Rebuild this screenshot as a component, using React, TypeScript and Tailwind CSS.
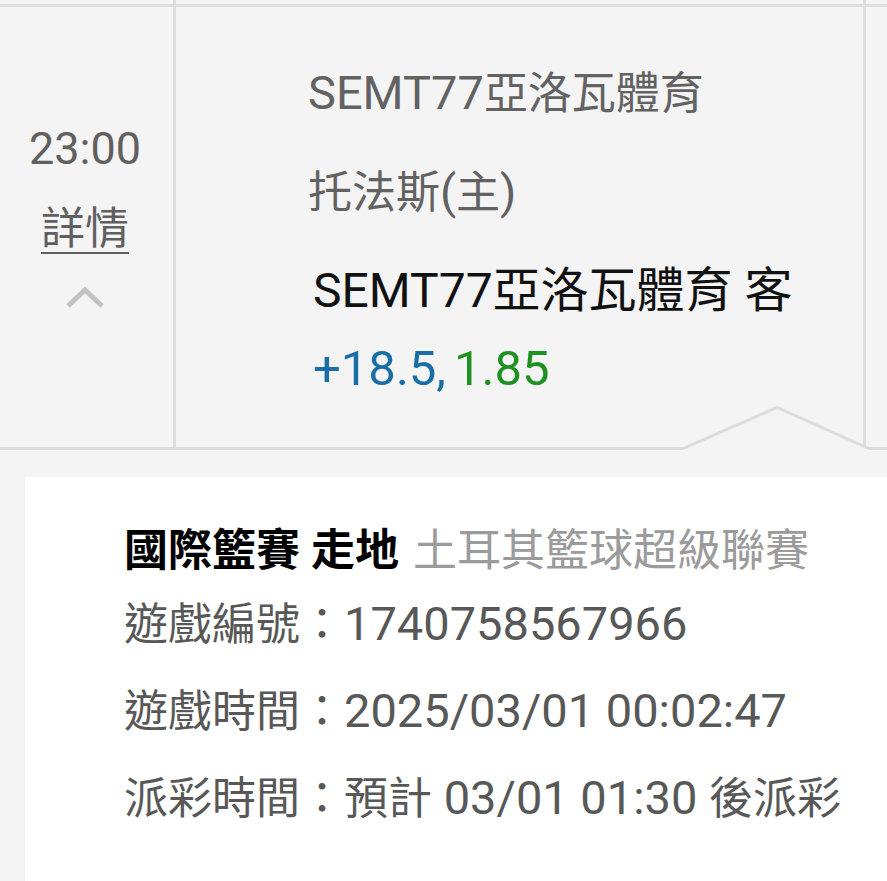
import React from "react";

function L({ children }: { children: React.ReactNode }) {
  return <span className="text-[47px]">{children}</span>;
}

export default function App() {
  const font = "font-['Roboto','Noto_Sans_CJK_TC',sans-serif]";
  return (
    <div className={`w-[887px] h-[881px] overflow-hidden bg-[#f4f4f4] ${font}`}>
      {/* stub of previous row */}
      <div className="flex h-[4px]">
        <div className="w-[176px] border-r-[3px] border-[#dedede]" />
        <div className="w-[690px] border-r-[3px] border-[#dedede]" />
        <div className="flex-1" />
      </div>
      {/* current row */}
      <div className="relative flex h-[443px] border-t-[3px] border-[#dedede]">
        <div className="w-[176px] border-r-[3px] border-[#dedede] flex flex-col items-center pt-[102px] pr-[3px]">
          <div className="text-[45px] leading-[80px] text-[#606060]">23:00</div>
          <div className="text-[44px] leading-[80px] text-[#606060] underline decoration-2 underline-offset-[8px]">詳情</div>
          <svg width="40" height="24" viewBox="0 0 40 24" className="mt-[16px]">
            <polyline points="3,21 20,5 37,21" fill="none" stroke="#c2c2c2" strokeWidth="5" />
          </svg>
        </div>
        <div className="w-[690px] border-r-[3px] border-[#dedede] pt-[37px]">
          <div className="pl-[132px] text-[44px] leading-[98px] text-[#626262] whitespace-nowrap">
            <L>SEMT77</L>亞洛瓦體育
          </div>
          <div className="pl-[132px] text-[44px] leading-[98px] text-[#626262] whitespace-nowrap">
            托法斯<L>(</L>主<L>)</L>
          </div>
          <div className="pl-[137px] text-[48px] leading-[98px] text-[#111111] whitespace-nowrap">SEMT77亞洛瓦體育 客</div>
          <div className="pl-[137px] text-[49px] leading-[58px] whitespace-nowrap">
            <span className="text-[#1a6ea6]">+18.5,</span>
            <span className="text-[#1e9121] ml-[8px]">1.85</span>
          </div>
        </div>
        <div className="flex-1" />
        <svg
          className="absolute left-0 top-[393px]"
          width="887"
          height="60"
          viewBox="0 0 887 60"
        >
          <polyline
            points="0,48.5 683,48.5 777,7.5 869,48.5 887,48.5"
            fill="none"
            stroke="#dcdcdc"
            strokeWidth="3"
          />
        </svg>
      </div>
      <div className="h-[30px]" />
      {/* detail card */}
      <div className="ml-[25px] h-[500px] bg-white pt-[44px] pl-[99px]">
        <div className="text-[44px] leading-[60px] whitespace-nowrap">
          <span className="font-bold text-black">國際籃賽 走地</span>
          <span className="text-[#9b9b9b] ml-[14px]">土耳其籃球超級聯賽</span>
        </div>
        <div className="text-[44px] leading-[86px] text-[#585858] whitespace-nowrap">
          遊戲編號：<L>1740758567966</L>
        </div>
        <div className="text-[44px] leading-[86px] text-[#585858] whitespace-nowrap">
          遊戲時間：<L>2025/03/01 00:02:47</L>
        </div>
        <div className="text-[44px] leading-[86px] text-[#585858] whitespace-nowrap">
          派彩時間：預計<L> 03/01 01:30 </L>後派彩
        </div>
      </div>
    </div>
  );
}
